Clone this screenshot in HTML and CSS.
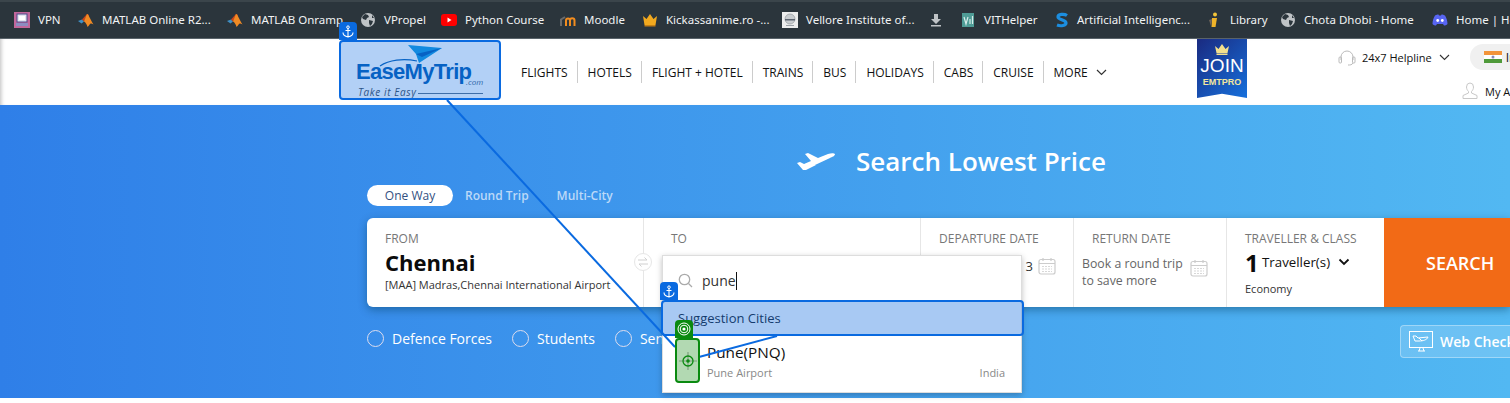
FILE: index.html
```html
<!DOCTYPE html>
<html lang="en">
<head>
    <meta charset="UTF-8">
    <meta name="viewport" content="width=device-width, initial-scale=1.0">
    <title>EaseMyTrip</title>
    <link rel="stylesheet" href="styles.css">
</head>
<body>
    <div class="bookmarks">
        <div class="mark"><svg width="16" height="16" viewBox="0 0 16 16"><rect width="16" height="16" fill="#c2679b"/><rect x="3" y="2" width="10" height="8" fill="#e4e4f0" stroke="#4a4a8c"/><rect x="5" y="4" width="6" height="4" fill="#fff"/><rect x="2" y="11" width="12" height="3" fill="#8c8cc0"/></svg><span>VPN</span></div>
        <div class="mark"><svg width="16" height="16" viewBox="0 0 16 16"><path d="M0 9l4-1.500 2 2-2.500 2z" fill="#3f8fc4"/><path d="M4 7.500l5-5.500 2 1-5 6.500z" fill="#c9461b"/><path d="M9 2c1.500 0 3 5 6.500 10.500-2-1-3-1.500-3.500-.5-1 1.500-2 2.500-2.500 3-.5-2-2-5-3.500-5.500z" fill="#f08a24"/></svg><span>MATLAB Online R2...</span></div>
        <div class="mark"><svg width="16" height="16" viewBox="0 0 16 16"><path d="M0 9l4-1.500 2 2-2.500 2z" fill="#3f8fc4"/><path d="M4 7.500l5-5.500 2 1-5 6.500z" fill="#c9461b"/><path d="M9 2c1.500 0 3 5 6.500 10.500-2-1-3-1.500-3.500-.5-1 1.500-2 2.500-2.500 3-.5-2-2-5-3.500-5.500z" fill="#f08a24"/></svg><span>MATLAB Onramp</span></div>
        <div class="mark"><svg width="16" height="16" viewBox="0 0 16 16"><circle cx="8" cy="8" r="7" fill="#bfc3c6"/><path d="M5 2l3 1 1 2-2 1-1 2-3-1-1-2zM9 8l4 1-1 3-2 2-1-3zM12 3l2 3-2 0z" fill="#2b353c"/></svg><span>VPropel</span></div>
        <div class="mark"><svg width="16" height="16" viewBox="0 0 16 16"><rect y="2" width="16" height="12" rx="3" fill="#f00"/><path d="M6.500 5.500l4 2.500-4 2.500z" fill="#fff"/></svg><span>Python Course</span></div>
        <div class="mark"><svg width="16" height="16" viewBox="0 0 16 16"><path d="M6 14V8.500a2 2 0 0 1 4 0V14M10 8.500a2.200 2.200 0 0 1 4.500 0V14" fill="none" stroke="#f28c1e" stroke-width="2"/><path d="M1 14V7.500L5 5" fill="none" stroke="#6b6b6b" stroke-width="2"/></svg><span>Moodle</span></div>
        <div class="mark"><svg width="16" height="16" viewBox="0 0 16 16"><path d="M1 4l3.500 3L8 2l3.500 5L15 4l-1.500 9h-11z" fill="#f2a91f"/><rect x="2.500" y="13" width="11" height="1.500" fill="#c77f12"/></svg><span>Kickassanime.ro -...</span></div>
        <div class="mark"><svg width="16" height="16" viewBox="0 0 16 16"><rect width="16" height="16" fill="#eceded"/><circle cx="8" cy="7" r="5" fill="#c9cdd0" stroke="#8a8f94" stroke-width=".6"/><rect x="3" y="7" width="10" height="1.500" fill="#5c6470"/><rect x="4" y="13" width="8" height="1" fill="#9aa0a6"/></svg><span>Vellore Institute of...</span></div>
        <div class="mark"><svg width="16" height="16" viewBox="0 0 16 16"><path d="M6 2h4v5h3l-5 5-5-5h3z" fill="#bfc3c6"/><rect x="3" y="13" width="10" height="1.500" fill="#bfc3c6"/></svg></div>
        <div class="mark"><svg width="14" height="16" viewBox="0 0 14 16"><rect y="1" width="12" height="14" fill="#4f9c96"/><path d="M2 5l2 7 2-7M8 7v5M10.500 4v8" fill="none" stroke="#d8ecea" stroke-width="1.200"/></svg><span>VITHelper</span></div>
        <div class="mark"><svg width="14" height="16" viewBox="0 0 14 16"><path d="M12 3.500C9 1.500 3 2 3 5c0 3 8 2.500 8 6 0 2.500-5 3.500-9 2" fill="none" stroke="#1c8ee0" stroke-width="3.200"/></svg><span>Artificial Intelligenc...</span></div>
        <div class="mark"><svg width="16" height="16" viewBox="0 0 16 16"><circle cx="9" cy="2.500" r="2" fill="#f3c53a"/><path d="M6 6h5l-1.500 9H5.500z" fill="#f0b429"/><path d="M3 8l3-1-1 7z" fill="#70645a"/></svg><span>Library</span></div>
        <div class="mark"><svg width="16" height="16" viewBox="0 0 16 16"><circle cx="8" cy="8" r="7" fill="#bfc3c6"/><path d="M5 2l3 1 1 2-2 1-1 2-3-1-1-2zM9 8l4 1-1 3-2 2-1-3zM12 3l2 3-2 0z" fill="#2b353c"/></svg><span>Chota Dhobi - Home</span></div>
        <div class="mark"><svg width="16" height="16" viewBox="0 0 16 16"><path d="M3 3.500C5 2.500 6 2.300 6.500 2.500L7 3.500h2l.5-1c1 0 2.500.5 3.500 1 1.500 2.500 2.500 5.500 2.500 8.500-1 1-2.500 1.500-3.500 1.500l-1-1.500H5L4 13.500C3 13.500 1.500 13 .5 12 .5 9 1.500 6 3 3.500z" fill="#5865f2"/><circle cx="5.700" cy="8.500" r="1.400" fill="#fff"/><circle cx="10.300" cy="8.500" r="1.400" fill="#fff"/></svg><span>Home | Hotstar</span></div>
    </div>

    <header class="site-header">
        <a class="logo">
            <svg class="logo-plane" width="70" height="26" viewBox="0 0 70 26"><path d="M5 24C14 18 28 16 42 19" fill="none" stroke="#0a62b8" stroke-width="1.200"/><path d="M33 3l34 3-23 15-3-9z" fill="#1a9be0"/><path d="M41 12L67 6 47 15z" fill="#0a62b8"/></svg>
            <span class="logo-name">EaseMyTrip</span>
            <span class="logo-com">.com</span>
            <span class="logo-tag">Take it Easy</span>
        </a>
        <nav class="nav">
            <a>FLIGHTS</a>
            <a>HOTELS</a>
            <a>FLIGHT + HOTEL</a>
            <a>TRAINS</a>
            <a>BUS</a>
            <a>HOLIDAYS</a>
            <a>CABS</a>
            <a>CRUISE</a>
            <a class="nav-more">MORE <svg width="11" height="7" viewBox="0 0 11 7"><path d="M1 1l4.500 4.500L10 1" fill="none" stroke="#333" stroke-width="1.200"/></svg></a>
        </nav>
        <div class="join">
            <svg width="14" height="11" viewBox="0 0 14 11"><path d="M0 2l3.500 3L7 0l3.500 5L14 2l-1.500 7h-11z" fill="#f3e08c"/><rect x="1.500" y="9.500" width="11" height="1.500" fill="#f3e08c"/></svg>
            <span class="join-big">JOIN</span>
            <span class="join-small">EMTPRO</span>
        </div>
        <div class="account">
            <div class="account-top">
                <svg width="18" height="17" viewBox="0 0 18 17"><path d="M3 11V8a6 6 0 0 1 12 0v3" fill="none" stroke="#bbb" stroke-width="1"/><rect x="1" y="8" width="2.500" height="6" rx="1" fill="none" stroke="#bbb"/><rect x="14.500" y="8" width="2.500" height="6" rx="1" fill="none" stroke="#bbb"/><path d="M15 14c-1 2-3 2-5 2" fill="none" stroke="#bbb"/></svg>
                <span class="helpline">24x7 Helpline</span>
                <svg width="11" height="7" viewBox="0 0 11 7"><path d="M1 1l4.500 4.500L10 1" fill="none" stroke="#333" stroke-width="1.100"/></svg>
                <div class="lang">
                    <svg width="18" height="12" viewBox="0 0 18 12"><rect width="18" height="4" fill="#f2943a"/><rect y="4" width="18" height="4" fill="#fff"/><rect y="8" width="18" height="4" fill="#4f9a3a"/><circle cx="9" cy="6" r="1.500" fill="#8a8ab8"/></svg>
                    <span>India</span>
                </div>
            </div>
            <div class="account-low">
                <svg width="18" height="18" viewBox="0 0 18 18"><path d="M9 1a3.500 4 0 0 1 3.500 4c0 2-1 3.500-2 4.500v1.500l5.500 2.500v3H2v-3l5.500-2.500V9.500c-1-1-2-2.500-2-4.500A3.500 4 0 0 1 9 1z" fill="none" stroke="#c8c8c8"/></svg>
                <span>My Account</span>
            </div>
        </div>
    </header>

    <section class="hero">
        <div class="hero-title">
            <svg width="38" height="19" viewBox="0 0 38 19"><path d="M0 11l3-1 4 2 7-3L8 2l3-1 10 5 10-4c3-1 6-1 7 0 0 2-3 3-5 4L18 13l1 0-10 5H6z" fill="#fff"/></svg>
            <h1>Search Lowest Price</h1>
        </div>
        <div class="tabs">
            <span class="tab tab-on">One Way</span>
            <span class="tab">Round Trip</span>
            <span class="tab">Multi-City</span>
        </div>
        <div class="card">
            <div class="cell cell-from">
                <div class="cell-label">FROM</div>
                <div class="city">Chennai</div>
                <div class="airport">[MAA] Madras,Chennai International Airport</div>
                <div class="swap"><svg width="12" height="12" viewBox="0 0 12 12"><path d="M1 4h9L7.500 1.500M11 8H2l2.500 2.500" fill="none" stroke="#d0d0d0"/></svg></div>
            </div>
            <div class="cell cell-to">
                <div class="cell-label to-label">TO</div>
                <div class="dropdown">
                    <div class="drop-search">
                        <svg width="15" height="15" viewBox="0 0 15 15"><circle cx="6.500" cy="6.500" r="5.200" fill="none" stroke="#aaa" stroke-width="1.300"/><path d="M10.500 10.500L14 14" stroke="#aaa" stroke-width="1.300"/></svg>
                        <span class="drop-query">pune</span>
                    </div>
                    <div class="drop-head">Suggestion Cities</div>
                    <div class="drop-item">
                        <div class="drop-city">Pune(PNQ)</div>
                        <div class="drop-sub"><span>Pune Airport</span><span>India</span></div>
                    </div>
                </div>
            </div>
            <div class="cell cell-date">
                <div class="cell-label">DEPARTURE DATE</div>
                <div class="date-row">
                    <span class="date-val">3</span>
                    <svg class="cal" width="18" height="18" viewBox="0 0 18 18"><rect x="1" y="2.500" width="16" height="14.500" rx="2" fill="none" stroke="#ccc" stroke-width="1.200"/><path d="M1 6.500h16M5 1v3M13 1v3" stroke="#ccc" stroke-width="1.200"/><path d="M4 9.500h10M4 12h10M4 14.500h10" stroke="#d8d8d8" stroke-width="1.200" stroke-dasharray="2 1"/></svg>
                </div>
            </div>
            <div class="cell cell-return">
                <div class="cell-label return-label">RETURN DATE</div>
                <div class="return-row">
                    <div class="return-text">Book a round trip<br>to save more</div>
                    <svg class="cal" width="18" height="18" viewBox="0 0 18 18"><rect x="1" y="2.500" width="16" height="14.500" rx="2" fill="none" stroke="#ccc" stroke-width="1.200"/><path d="M1 6.500h16M5 1v3M13 1v3" stroke="#ccc" stroke-width="1.200"/><path d="M4 9.500h10M4 12h10M4 14.500h10" stroke="#d8d8d8" stroke-width="1.200" stroke-dasharray="2 1"/></svg>
                </div>
            </div>
            <div class="cell cell-trav">
                <div class="cell-label">TRAVELLER &amp; CLASS</div>
                <div class="trav-row">
                    <span class="trav-num">1</span>
                    <span class="trav-text">Traveller(s)</span>
                    <svg width="12" height="8" viewBox="0 0 12 8"><path d="M1.500 1.500L6 6l4.500-4.500" fill="none" stroke="#111" stroke-width="1.800"/></svg>
                </div>
                <div class="trav-class">Economy</div>
            </div>
            <div class="search-btn">SEARCH</div>
        </div>
        <div class="fares">
            <label class="fare"><i class="radio"></i>Defence Forces</label>
            <label class="fare"><i class="radio"></i>Students</label>
            <label class="fare fare-senior"><i class="radio"></i><span class="fare-cut">Senior Citizens</span></label>
            <div class="checkin">
                <svg width="24" height="22" viewBox="0 0 24 22"><rect x=".5" y=".5" width="23" height="16" fill="none" stroke="#fff"/><path d="M4 5h3l2 2 10-1c-1 3-5 4-9 4H6zM10 7l3 3M9 20h7M11 17l-1 3M14 17l1 3" fill="none" stroke="#fff"/></svg>
                <span>Web Check-in</span>
            </div>
        </div>
    </section>

    <!-- inspector overlay drawn over the page -->
    <svg class="links" width="1510" height="403" viewBox="0 0 1510 403">
        <path d="M447 100L675 347" stroke="#0a6ae0" stroke-width="2"/>
        <path d="M699 357L777 336" stroke="#0a6ae0" stroke-width="2"/>
    </svg>
    <div class="pick pick-logo"></div>
    <div class="pick-tab tab-logo"><svg width="12" height="13" viewBox="0 0 12 13"><circle cx="6" cy="2.200" r="1.300" fill="none" stroke="#fff"/><path d="M6 3.500V12M3.500 5.500h5M1 7.500c0 2.500 2.500 4 5 4.500 2.500-.5 5-2 5-4.500" fill="none" stroke="#fff" stroke-width="1.100"/></svg></div>
    <div class="pick pick-row"></div>
    <div class="pick-tab tab-row"><svg width="12" height="13" viewBox="0 0 12 13"><circle cx="6" cy="2.200" r="1.300" fill="none" stroke="#fff"/><path d="M6 3.500V12M3.500 5.500h5M1 7.500c0 2.500 2.500 4 5 4.500 2.500-.5 5-2 5-4.500" fill="none" stroke="#fff" stroke-width="1.100"/></svg></div>
    <div class="pick-green">
        <svg width="18" height="18" viewBox="0 0 18 18"><path d="M9 0v18M0 9h18" stroke="#7fa07f" stroke-width="1.200"/><circle cx="9" cy="9" r="5" fill="none" stroke="#0a8a10" stroke-width="1.300"/><circle cx="9" cy="9" r="1.800" fill="#0a8a10"/></svg>
    </div>
    <div class="pick-tab-green"><svg width="14" height="14" viewBox="0 0 14 14"><circle cx="7" cy="7" r="6" fill="none" stroke="#fff"/><circle cx="7" cy="7" r="3.800" fill="none" stroke="#fff"/><circle cx="7" cy="7" r="1.600" fill="#fff"/></svg></div>
</body>
</html>
```

FILE: styles.css
```css
* {
    box-sizing: border-box;
}
html, body {
    margin: 0;
    padding: 0;
    width: 1510px;
    height: 403px;
    overflow: hidden;
}
body {
    position: relative;
    font-family: "Open Sans", "Noto Sans", sans-serif;
    background-color: #fff;
    color: #111;
}

/* browser bookmarks bar */
.bookmarks {
    display: grid;
    grid-template-columns: 64px 149px 133px 81px 119px 82px 140px 146px 34px 93px 151px 74px 152px minmax(0, 1fr);
    align-items: center;
    height: 39px;
    padding: 0 0 1px 14px;
    background-color: #2b353c;
    border-top: 2px solid #3b454b;
    border-bottom: 1px solid #59636a;
    color: #f1f3f4;
    font-family: "Noto Sans", sans-serif;
    font-size: 11.500px;
}
.mark {
    display: flex;
    align-items: center;
    gap: 8px;
    min-width: 0;
    white-space: nowrap;
    overflow: hidden;
}
.mark svg {
    flex: none;
}

/* site header */
.site-header {
    display: grid;
    grid-template-columns: 161px 696px 50px 263px;
    height: 66px;
    padding-left: 340px;
    box-shadow: inset 4px 0 4px -3px #bbb;
}
.logo {
    position: relative;
    display: block;
    color: #0a62b8;
}
.logo-plane {
    position: absolute;
    left: 35px;
    top: 3px;
}
.logo-name {
    position: absolute;
    left: 16px;
    top: 18px;
    font-size: 22px;
    line-height: 30px;
    letter-spacing: -.7px;
    font-family: "Liberation Sans", sans-serif;
    font-weight: 700;
}
.logo-com {
    position: absolute;
    left: 126px;
    top: 38px;
    font-size: 8px;
    line-height: 10px;
    font-style: italic;
    color: #44698f;
}
.logo-tag {
    position: absolute;
    left: 18px;
    top: 47px;
    width: 125px;
    font-size: 10px;
    line-height: 13px;
    font-style: italic;
    letter-spacing: .6px;
    color: #3f4f60;
    background: linear-gradient(#5a7390, #5a7390) 60px 7px / 65px 1px no-repeat;
}
.nav {
    display: flex;
    align-items: center;
    padding-left: 10px;
    height: 66px;
    font-size: 12px;
}
.nav a {
    display: flex;
    align-items: center;
    gap: 8px;
    height: 22px;
    padding: 0 9px 0 10px;
    border-right: 1px solid #ccc;
    color: #111;
}
.nav .nav-more {
    border-right: none;
}
.join {
    display: flex;
    flex-direction: column;
    align-items: center;
    height: 59px;
    padding-top: 5px;
    background: linear-gradient(135deg, #1a2a80, #1670dc);
    clip-path: polygon(0 0, 100% 0, 100% 100%, 50% 93%, 0 100%);
}
.join-big {
    margin-top: 1px;
    color: #fff;
    font-family: "Liberation Sans", sans-serif;
    font-size: 19px;
    line-height: 20px;
}
.join-small {
    color: #f3e79e;
    font-family: "Liberation Sans", sans-serif;
    font-weight: 700;
    font-size: 9px;
    line-height: 11px;
    margin-top: 1px;
}
.account {
    padding: 5px 0 0 91px;
    font-size: 11px;
    overflow: hidden;
    white-space: nowrap;
}
.account-top {
    display: flex;
    align-items: center;
    height: 26px;
}
.account-top svg, .account-low svg {
    flex: none;
}
.helpline {
    flex: none;
    margin: 0 7px 0 6px;
}
.lang {
    display: flex;
    align-items: center;
    gap: 4px;
    flex: none;
    width: 60px;
    height: 26px;
    margin-left: 20px;
    padding-left: 14px;
    background-color: #f0f0f0;
    border-radius: 13px 0 0 13px;
    font-size: 12px;
}
.account-low {
    display: flex;
    align-items: center;
    gap: 6px;
    margin: 12px 0 0 123px;
}

/* blue search area */
.hero {
    height: 293px;
    padding: 40px 0 0 367px;
    background: linear-gradient(90deg, #2f7fe8, #52b8f2);
}
.hero-title {
    display: flex;
    align-items: center;
    gap: 21px;
    height: 32px;
    margin-left: 430px;
}
.hero-title h1 {
    margin: 0;
    color: #fff;
    font-size: 26px;
    font-weight: 600;
    white-space: nowrap;
}
.tabs {
    display: flex;
    align-items: center;
    gap: 12px;
    height: 21px;
    margin-top: 8px;
    font-size: 12px;
    font-weight: 600;
    color: #bcd9f8;
}
.tab {
    padding: 0 16px 0 0;
}
.tab-on {
    padding: 0;
    width: 86px;
    line-height: 21px;
    text-align: center;
    background-color: #fff;
    border-radius: 11px;
    color: #33507f;
    font-weight: 500;
}
.card {
    display: flex;
    height: 89px;
    margin-top: 12px;
    background-color: #fff;
    border-radius: 6px 0 0 6px;
    box-shadow: 0 3px 8px rgba(0, 60, 90, .45);
}
.cell {
    position: relative;
    flex: none;
    padding: 14px 0 0 18px;
    border-right: 1px solid #e6e6e6;
}
.cell-label {
    font-size: 12px;
    line-height: 14px;
    color: #777;
    white-space: nowrap;
}
.cell-from {
    width: 277px;
}
.city {
    margin-top: 1px;
    font-size: 22px;
    line-height: 30px;
    font-weight: 700;
    color: #0b0b0b;
}
.airport {
    font-size: 11px;
    line-height: 15px;
    color: #333;
}
.swap {
    position: absolute;
    top: 35px;
    right: -9px;
    display: flex;
    align-items: center;
    justify-content: center;
    width: 18px;
    height: 18px;
    background-color: #fff;
    border: 1px solid #e6e6e6;
    border-radius: 50%;
    z-index: 1;
}
.cell-to {
    width: 277px;
    padding-left: 27px;
}
.dropdown {
    position: absolute;
    top: 37px;
    left: 18px;
    z-index: 2;
    width: 360px;
    height: 138px;
    background-color: #fff;
    border: 1px solid #ddd;
    box-shadow: 0 2px 6px rgba(0, 0, 0, .25);
}
.drop-search {
    display: flex;
    align-items: center;
    gap: 9px;
    height: 45px;
    padding: 4px 0 0 15px;
}
.drop-query {
    border-right: 1px solid #111;
    font-size: 14px;
    line-height: 18px;
    color: #333;
}
.drop-head {
    height: 35px;
    padding: 1px 0 0 15px;
    background-color: #f1f5fb;
    font-size: 13px;
    line-height: 33px;
    font-weight: 500;
    color: #1d2b3a;
}
.drop-item {
    padding: 6px 16px 0 44px;
}
.drop-city {
    font-size: 15.300px;
    line-height: 20px;
    font-weight: 500;
    color: #111;
}
.drop-sub {
    display: flex;
    justify-content: space-between;
    margin-top: 3px;
    font-size: 11px;
    line-height: 16px;
    color: #888;
}
.cell-date {
    width: 153px;
}
.date-row {
    display: flex;
    justify-content: flex-end;
    align-items: center;
    gap: 5px;
    margin-top: 11px;
    padding-right: 17px;
    font-size: 13px;
    color: #333;
}
.cell-return {
    width: 153px;
    padding-left: 8px;
}
.return-label {
    padding-left: 10px;
}
.return-row {
    display: flex;
    gap: 7px;
    margin-top: 9px;
}
.return-text {
    font-size: 12.300px;
    line-height: 17px;
    color: #666;
    white-space: nowrap;
}
.return-row .cal {
    margin-top: 4px;
}
.cell-trav {
    width: 157px;
    border-right: none;
}
.trav-row {
    display: flex;
    align-items: center;
    height: 30px;
    margin-top: 1px;
}
.trav-num {
    width: 17px;
    font-size: 24px;
    font-weight: 700;
    color: #0b0b0b;
}
.trav-text {
    margin-right: 8px;
    font-size: 13.300px;
}
.trav-class {
    font-size: 11px;
    line-height: 14px;
    margin-top: 5px;
    color: #333;
}
.search-btn {
    flex: none;
    width: 126px;
    padding-left: 42px;
    background-color: #f26a16;
    color: #fff;
    font-size: 18px;
    font-weight: 600;
    line-height: 90px;
}
.fares {
    display: flex;
    height: 33px;
    margin-top: 18px;
    color: #fff;
    font-size: 14px;
    white-space: nowrap;
}
.fare {
    display: flex;
    align-items: center;
    gap: 8px;
    height: 27px;
    margin-right: 20px;
}
.fare-senior {
    width: 48px;
    overflow: hidden;
}
.fare-cut {
    flex: none;
}
.radio {
    flex: none;
    width: 17px;
    height: 17px;
    border: 1px solid #dde;
    border-radius: 50%;
}
.checkin {
    display: flex;
    align-items: center;
    gap: 7px;
    flex: none;
    width: 110px;
    height: 33px;
    margin-left: auto;
    padding-left: 8px;
    background-color: rgba(255, 255, 255, .16);
    border: 1px solid rgba(255, 255, 255, .35);
    border-right: none;
    border-radius: 4px 0 0 4px;
    font-weight: 600;
    overflow: hidden;
}
.checkin svg {
    flex: none;
}

/* inspector overlay */
.links {
    position: absolute;
    left: 0;
    top: 0;
    z-index: 5;
    pointer-events: none;
}
.pick {
    position: absolute;
    z-index: 4;
    background-color: rgba(0, 100, 225, .3);
    border: 2px solid #0a6ae0;
    border-radius: 4px;
}
.pick-logo {
    left: 339px;
    top: 40px;
    width: 162px;
    height: 60px;
}
.pick-row {
    left: 661px;
    top: 300px;
    width: 363px;
    height: 36px;
}
.pick-tab {
    position: absolute;
    z-index: 6;
    display: flex;
    align-items: center;
    justify-content: center;
    width: 18px;
    height: 18px;
    background-color: #0a6ae0;
    border-radius: 4px 4px 0 0;
}
.tab-logo {
    left: 339px;
    top: 22px;
}
.tab-row {
    left: 660px;
    top: 282px;
}
.pick-green {
    position: absolute;
    z-index: 6;
    left: 675px;
    top: 338px;
    display: flex;
    align-items: center;
    justify-content: center;
    width: 25px;
    height: 45px;
    background-color: rgba(0, 128, 0, .3);
    border: 2px solid #0a8a10;
    border-radius: 4px;
}
.pick-tab-green {
    position: absolute;
    z-index: 6;
    left: 675px;
    top: 320px;
    display: flex;
    align-items: center;
    justify-content: center;
    width: 18px;
    height: 18px;
    background-color: #0a8a10;
    border-radius: 4px 4px 0 0;
}
```
